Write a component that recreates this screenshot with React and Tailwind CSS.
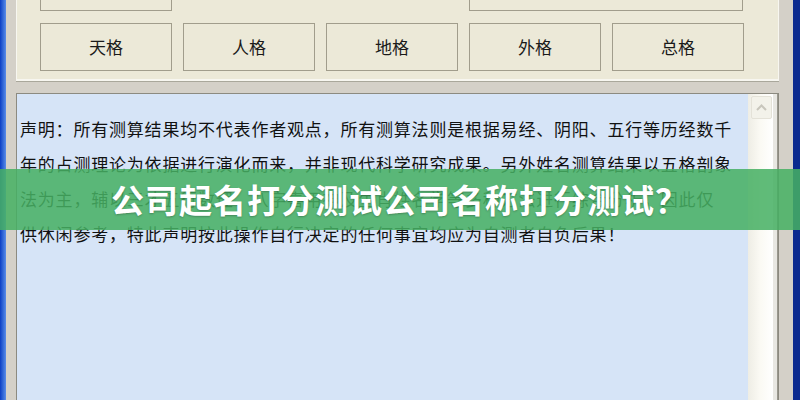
import React from 'react';

const cjk = { fontFamily: '"Noto Sans CJK SC", "Noto Sans", sans-serif' };

const lines = [
  '声明：所有测算结果均不代表作者观点，所有测算法则是根据易经、阴阳、五行等历经数千',
  '年的占测理论为依据进行演化而来，并非现代科学研究成果。另外姓名测算结果以五格剖象',
  '法为主，辅以三才五行数理、八字喜用神及生肖姓名学等多种方法进行综合分析，因此仅',
  '供休闲参考，特此声明按此操作自行决定的任何事宜均应为自测者自负后果！',
];

const grids = ['天格', '人格', '地格', '外格', '总格'];

const App = () => {
  return (
    <div className="relative flex w-[800px] h-[400px] overflow-hidden bg-[#d4d0c8]" style={cjk}>
      {/* window frame left */}
      <div className="w-[6px] shrink-0 bg-gradient-to-r from-[#0a3cc4] to-[#5a8ce8]"></div>

      <div className="flex min-w-0 flex-1 flex-col pl-[10px] pr-[14px]">
        {/* top panel */}
        <div className="h-[81px] shrink-0 bg-[#ece9d8] border-x border-b-2 border-[#f7f6f0] shadow-[0_1px_0_#a9a79b]">
          <div className="flex h-[11px] pl-[23px]">
            <div className="w-[132px] border-x border-b border-[#a19d8c]"></div>
            <div className="ml-[297px] w-[274px] border-x border-b border-[#a19d8c]"></div>
          </div>
          <div className="flex gap-[11px] pl-[23px] mt-[12px]">
            {grids.map((g) => (
              <div
                key={g}
                className="flex h-[48px] w-[132px] items-center justify-center border border-[#a19d8c] bg-[#ece9d8] text-[17px] text-[#1a1a1a]"
              >
                {g}
              </div>
            ))}
          </div>
        </div>

        {/* result text area */}
        <div className="mt-[12px] flex min-h-0 flex-1 border border-[#8c8a80] border-b-0">
          <div className="min-w-0 flex-1 overflow-hidden bg-[#d6e4f7] pl-[3px] pt-[17px]">
            {lines.map((l, i) => (
              <div key={i} className="whitespace-nowrap text-[17px] leading-[35px] tracking-[0.8px] text-[#111]">
                {l}
              </div>
            ))}
          </div>
          <div className="w-[25px] shrink-0 bg-gradient-to-r from-[#eeede5] via-[#fbfaf4] to-[#ffffff] pt-[2px] pl-[3px]">
            <div className="flex h-[23px] w-[21px] items-center justify-center rounded-[2px] border border-[#e4e2d8] bg-[#f3f2ea]">
              <svg width="11" height="7" viewBox="0 0 11 7">
                <path d="M1 6 L5.5 1.5 L10 6" fill="none" stroke="#c8c6bc" strokeWidth="2" />
              </svg>
            </div>
          </div>
          <div className="w-[5px] shrink-0 bg-[#e8e7e2] border-r border-[#9a988e]"></div>
        </div>
      </div>

      {/* window frame right */}
      <div className="w-[7px] shrink-0 bg-[#0b2a8f]"></div>

      {/* title banner */}
      <div className="absolute left-0 right-0 top-[169px] flex h-[61px] items-center justify-center bg-[rgba(70,176,99,0.86)]">
        <span className="text-[33px] font-bold tracking-[1px] text-white [text-shadow:0_1px_2px_rgba(0,0,0,0.25)]">
          公司起名打分测试公司名称打分测试？
        </span>
      </div>
    </div>
  );
};

export default App;
